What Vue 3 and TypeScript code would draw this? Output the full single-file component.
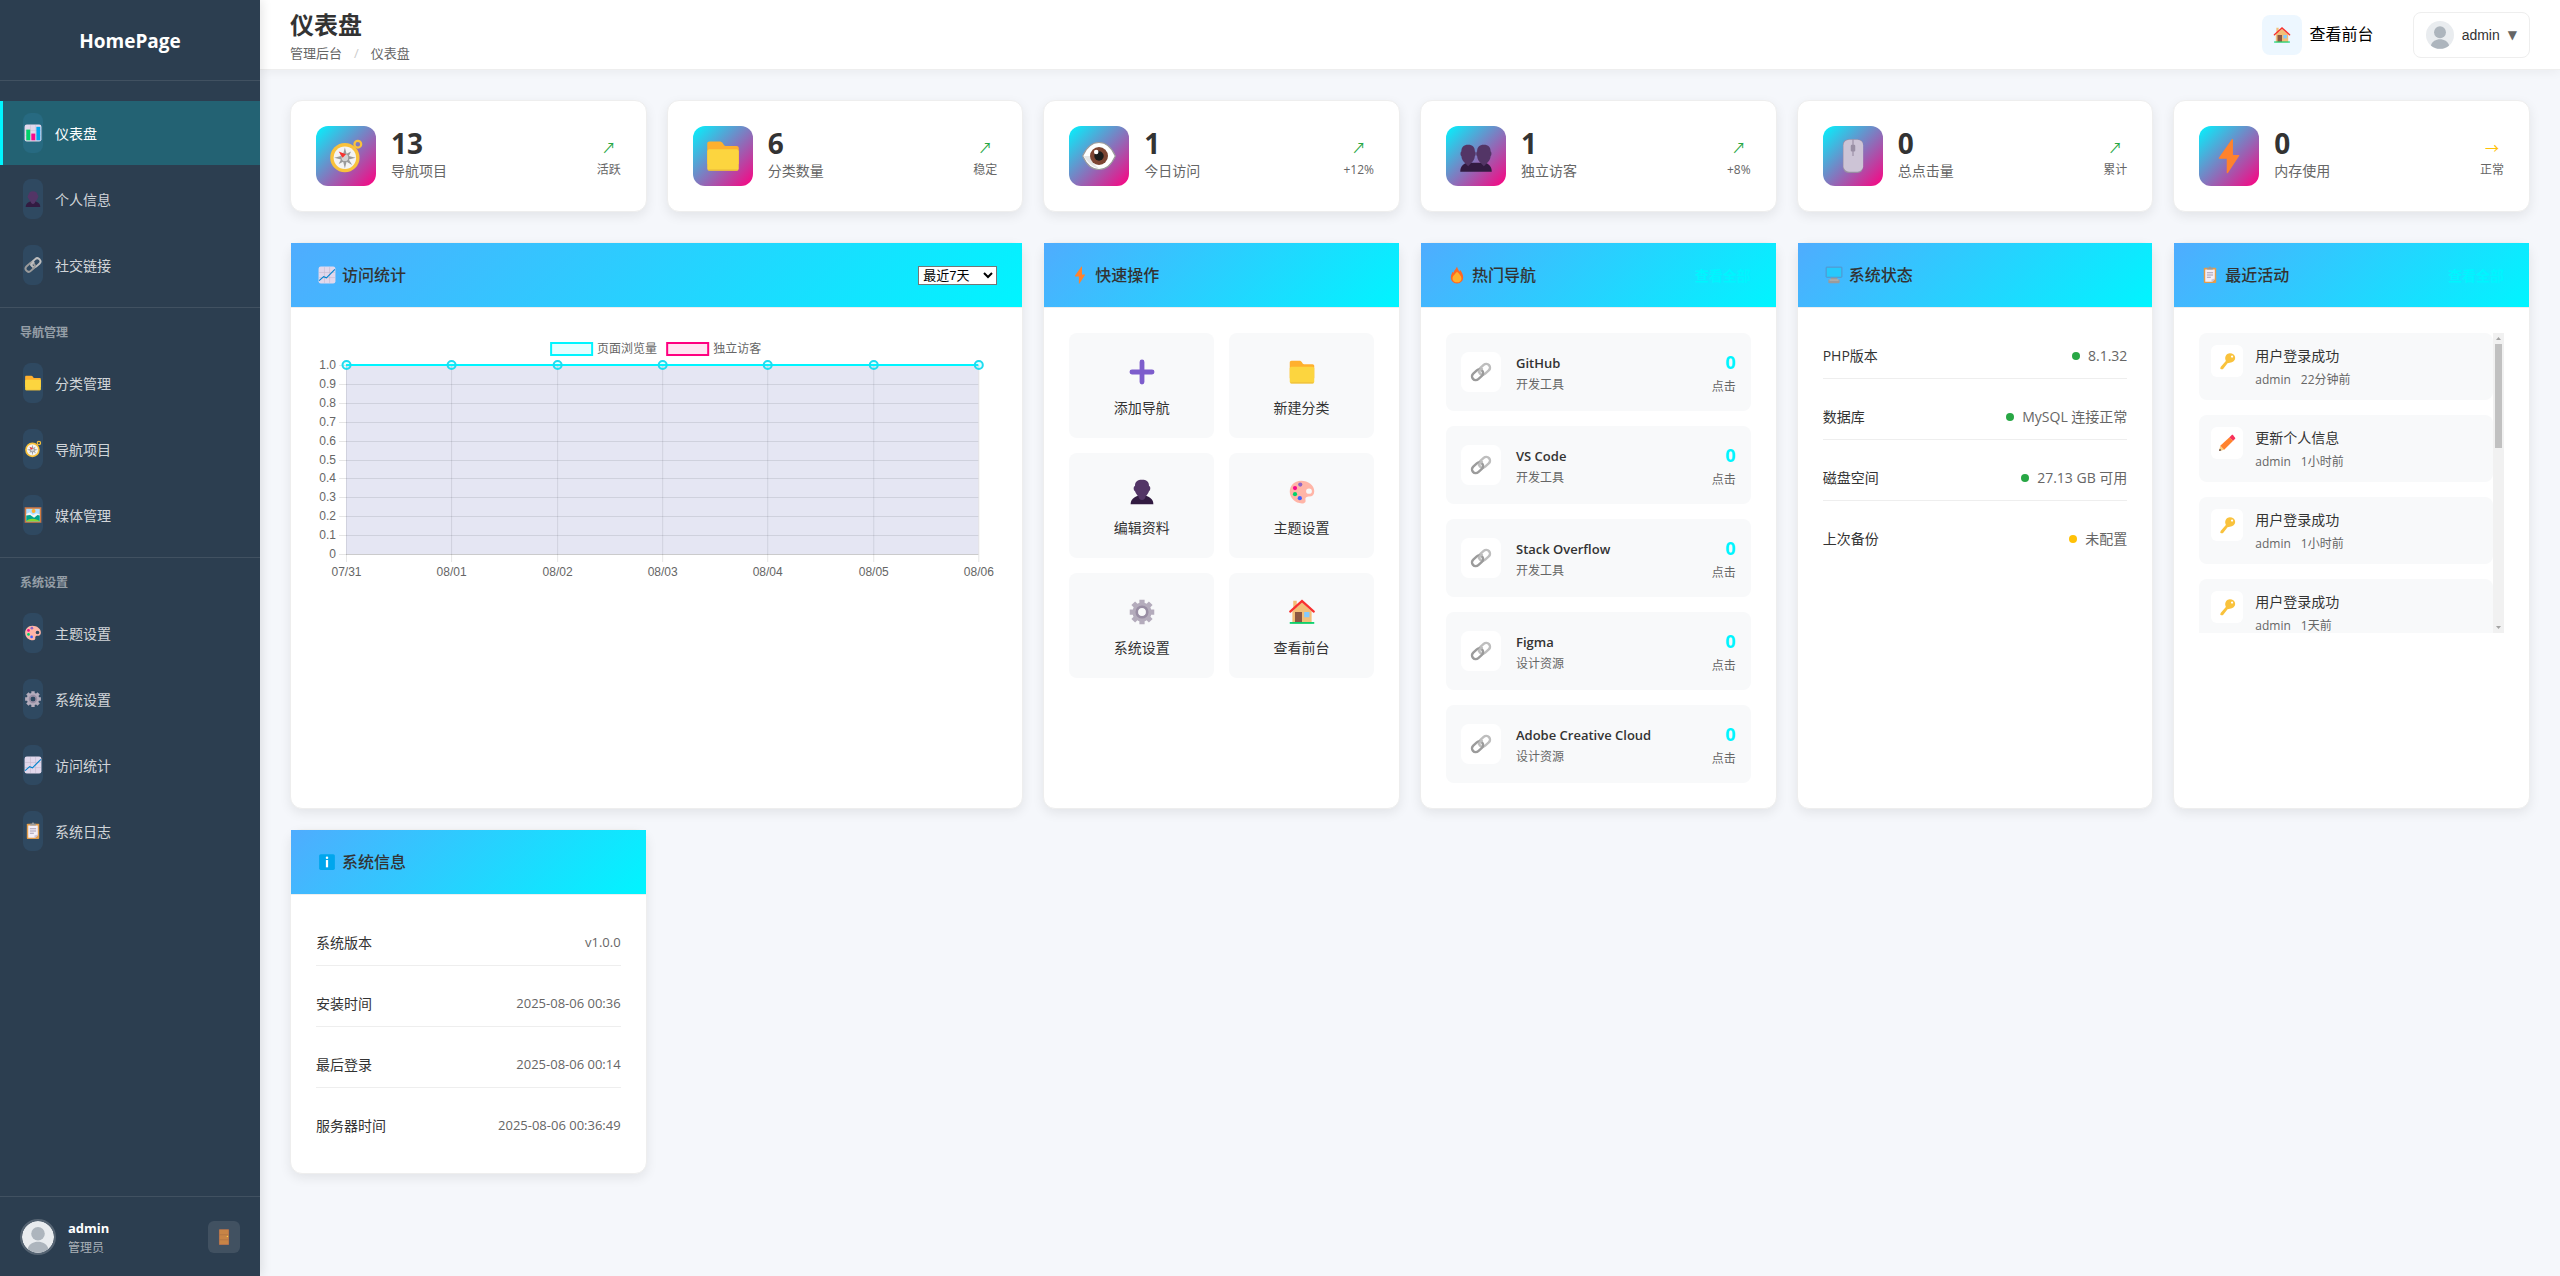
<script setup lang="ts">
import { ref } from 'vue'

interface NavItem { icon: string; label: string; active?: boolean }
interface NavSection { title?: string; items: NavItem[] }

const sections: NavSection[] = [
  {
    items: [
      { icon: 'bars', label: '仪表盘', active: true },
      { icon: 'person', label: '个人信息' },
      { icon: 'link', label: '社交链接' },
    ],
  },
  {
    title: '导航管理',
    items: [
      { icon: 'folder', label: '分类管理' },
      { icon: 'compass', label: '导航项目' },
      { icon: 'picture', label: '媒体管理' },
    ],
  },
  {
    title: '系统设置',
    items: [
      { icon: 'palette', label: '主题设置' },
      { icon: 'gear', label: '系统设置' },
      { icon: 'trend', label: '访问统计' },
      { icon: 'clipboard', label: '系统日志' },
    ],
  },
]

const stats = [
  { icon: 'compass', value: '13', label: '导航项目', arrow: '↗', note: '活跃' },
  { icon: 'folder', value: '6', label: '分类数量', arrow: '↗', note: '稳定' },
  { icon: 'eye', value: '1', label: '今日访问', arrow: '↗', note: '+12%' },
  { icon: 'people', value: '1', label: '独立访客', arrow: '↗', note: '+8%' },
  { icon: 'mouse', value: '0', label: '总点击量', arrow: '↗', note: '累计' },
  { icon: 'bolt', value: '0', label: '内存使用', arrow: '→', note: '正常', steady: true },
]

const actions = [
  { icon: 'plus', label: '添加导航' },
  { icon: 'folder', label: '新建分类' },
  { icon: 'person', label: '编辑资料' },
  { icon: 'palette', label: '主题设置' },
  { icon: 'gear', label: '系统设置' },
  { icon: 'house', label: '查看前台' },
]

const popular = [
  { name: 'GitHub', group: '开发工具' },
  { name: 'VS Code', group: '开发工具' },
  { name: 'Stack Overflow', group: '开发工具' },
  { name: 'Figma', group: '设计资源' },
  { name: 'Adobe Creative Cloud', group: '设计资源' },
]

const status = [
  { label: 'PHP版本', value: '8.1.32', ok: true },
  { label: '数据库', value: 'MySQL 连接正常', ok: true },
  { label: '磁盘空间', value: '27.13 GB 可用', ok: true },
  { label: '上次备份', value: '未配置', ok: false },
]

const activity = [
  { icon: 'key', title: '用户登录成功', time: '22分钟前' },
  { icon: 'pencil', title: '更新个人信息', time: '1小时前' },
  { icon: 'key', title: '用户登录成功', time: '1小时前' },
  { icon: 'key', title: '用户登录成功', time: '1天前' },
]

const info = [
  { label: '系统版本', value: 'v1.0.0' },
  { label: '安装时间', value: '2025-08-06 00:36' },
  { label: '最后登录', value: '2025-08-06 00:14' },
  { label: '服务器时间', value: '2025-08-06 00:36:49' },
]

const range = ref('7')

// Chart geometry, in the units of the chart's viewBox
const plot = { left: 30, right: 662, top: 32, bottom: 221 }
const days = ['07/31', '08/01', '08/02', '08/03', '08/04', '08/05', '08/06']
const xTicks = days.map((label, i) => ({
  label,
  x: Math.round(plot.left + ((plot.right - plot.left) * i) / (days.length - 1)) + 0.5,
}))
const yTicks = Array.from({ length: 11 }, (_, i) => ({
  label: i === 0 ? '0' : (i / 10).toFixed(1),
  y: Math.round(plot.bottom - ((plot.bottom - plot.top) * i) / 10) + 0.5,
}))
</script>

<template>
  <svg class="sprite" aria-hidden="true">
    <symbol id="i-bars" viewBox="0 0 32 32">
      <rect x="1" y="1" width="30" height="30" rx="4" fill="#e1d8ec" />
      <path d="M11.500 2v28M20.500 2v28M2 11.500h28M2 20.500h28" stroke="#cdc4d6" />
      <path d="M4 10h7v19H4z" fill="#00d26a" />
      <path d="M13 17h7v12h-7z" fill="#f70a8d" />
      <path d="M22 5h7v24h-7z" fill="#00a6ed" />
    </symbol>
    <symbol id="i-person" viewBox="0 0 32 32">
      <path d="M3 30c0-5 3-8 9-10h8c6 2 9 5 9 10z" fill="#321b41" />
      <path d="M16 2c5 0 8 2 8 7 2 0 2 5 0 6-1 3-3 5-4 6 0 2-2 4-4 4s-4-2-4-4c-1-1-3-3-4-6-2-1-2-6 0-6 0-5 3-7 8-7z" fill="#533566" />
    </symbol>
    <symbol id="i-people" viewBox="0 0 32 32">
      <path d="M2 30c0-4 2-7 6-8h16c4 1 6 4 6 8z" fill="#321b41" />
      <path d="M9 6c4 0 6 2 6 6 1 0 1 4 0 4 0 3-2 5-3 6l-3 3-3-3c-1-1-3-3-3-6-1 0-1-4 0-4 0-4 2-6 6-6zM23 6c4 0 6 2 6 6 1 0 1 4 0 4 0 3-2 5-3 6l-3 3-3-3c-1-1-3-3-3-6-1 0-1-4 0-4 0-4 2-6 6-6z" fill="#533566" />
    </symbol>
    <symbol id="i-link" viewBox="0 0 32 32">
      <g fill="none" stroke-width="3.500">
        <rect x="12" y="6.500" width="18" height="11" rx="5.500" transform="rotate(-42 21 12)" stroke="#bebebe" />
        <rect x="2" y="14.500" width="18" height="11" rx="5.500" transform="rotate(-42 11 20)" stroke="#9b9b9b" />
        <path d="M13 17c0-2 1-3 2-4l3-3" stroke="#bebebe" />
      </g>
    </symbol>
    <symbol id="i-folder" viewBox="0 0 32 32">
      <path d="M4 3h9c1 0 2 .5 2.500 1.300L17 6.500c.5.600 1 .5 2 .5h9c1.200 0 2 .8 2 2v14H2V5c0-1.200.8-2 2-2z" fill="#ffb02e" />
      <rect x="2" y="10" width="28" height="19" rx="2" fill="#fcd53f" />
      <path d="M3 28.500h26" stroke="#e8b63a" />
    </symbol>
    <symbol id="i-compass" viewBox="0 0 32 32">
      <circle cx="26.500" cy="5.500" r="3" fill="none" stroke="#f9c23c" stroke-width="2" />
      <circle cx="15" cy="17.500" r="13" fill="#f9c23c" />
      <circle cx="15" cy="17.500" r="10" fill="#f4f4f4" />
      <path d="M15 8.500l1.500 5.500 4-2-2 4 6 1.500-6 1.500 3 5-5-3-1.500 6-1.500-6-4 2 2-4-6-1.500 6-1.500-1-3 3 1z" fill="#9b9b9b" />
      <circle cx="15" cy="17.500" r="3" fill="#d3d3d3" />
      <path d="M9.500 12l6.500 2.500-3 3z" fill="#f8312f" />
    </symbol>
    <symbol id="i-picture" viewBox="0 0 32 32">
      <rect x="1" y="2" width="30" height="28" fill="#a56953" />
      <rect x="2" y="3" width="28" height="26" fill="#d67d3e" />
      <rect x="4" y="5" width="24" height="22" fill="#aeddff" />
      <path d="M4 14l6-3 6 5 6-3 6 2v12H4z" fill="#f4f4f4" />
      <path d="M4 17l7-1 7 5 6-5 4 1v10H4z" fill="#00a38b" />
      <path d="M4 27c3-6 18-6 24 0z" fill="#86d72f" />
      <circle cx="17" cy="9" r="3.500" fill="#ffb02e" />
    </symbol>
    <symbol id="i-palette" viewBox="0 0 32 32">
      <path fill-rule="evenodd" d="M15 3C7 3 2 9 2 15.500 2 23 8 29 16 29c3.500 0 4.500-2 4-4-.5-3 1.500-4 4-4 4 0 6-2 6-6C30 8 23 3 15 3zm9 9a3.300 3 0 1 1 0 6 3.300 3 0 0 1 0-6z" fill="#ffb5a7" />
      <circle cx="14" cy="7.500" r="2.400" fill="#8d65c5" />
      <circle cx="8" cy="11.500" r="2.400" fill="#f70a8d" />
      <circle cx="8" cy="18.500" r="2.400" fill="#00d26a" />
      <circle cx="13.500" cy="23" r="2.400" fill="#3f5fff" />
    </symbol>
    <symbol id="i-gear" viewBox="0 0 32 32">
      <path d="M16 2v7M16 23v7M2 16h7M23 16h7M6 6l5 5M21 21l5 5M26 6l-5 5M6 26l5-5" stroke="#b4acbc" stroke-width="6" />
      <circle cx="16" cy="16" r="8" fill="none" stroke="#b4acbc" stroke-width="6" />
      <circle cx="16" cy="16" r="6" fill="none" stroke="#998ea4" stroke-width="3" />
    </symbol>
    <symbol id="i-trend" viewBox="0 0 32 32">
      <rect x="1" y="1" width="30" height="30" rx="4" fill="#e1d8ec" />
      <path d="M11.500 2v28M20.500 2v28M2 11.500h28M2 20.500h28" stroke="#c3b9ce" />
      <path d="M2 26l8-7 5 2L30 6" fill="none" stroke="#0084ce" stroke-width="2" />
    </symbol>
    <symbol id="i-clipboard" viewBox="0 0 32 32">
      <rect x="5" y="3" width="22" height="27" rx="1.500" fill="#e39d4a" />
      <path d="M7.500 6h17v17l-5 5h-12z" fill="#f3eef8" />
      <path d="M24.500 22v2l-4 4h-2v-4z" fill="#cdc4d6" />
      <path d="M11 6V3h3c0-3 4-3 4 0h3v3z" fill="#9b9b9b" />
      <path d="M10.500 12h11M10.500 16h11M10.500 20h7" stroke="#998ea4" stroke-width="1.500" />
    </symbol>
    <symbol id="i-eye" viewBox="0 0 32 32">
      <path d="M1.500 16C5 8 10 4 16 4s11 4 14.500 12C27 24 22 28 16 28S5 24 1.500 16z" fill="#fff" stroke="#9b9b9b" />
      <path d="M2.500 16C6 22 10 26 16 27c-4-3-7-7-7-11z" fill="#e6e6e6" />
      <circle cx="16" cy="16" r="8" fill="#7d4533" />
      <circle cx="16" cy="16" r="4.200" fill="#1c1c1c" />
      <circle cx="13.500" cy="12.500" r="2" fill="#fff" />
    </symbol>
    <symbol id="i-mouse" viewBox="0 0 32 32">
      <rect x="7" y="1" width="18" height="30" rx="5" fill="#998ea4" />
      <rect x="7.500" y="1.500" width="17.500" height="28.500" rx="5" fill="#cdc4d6" />
      <path d="M16 1v15" stroke="#998ea4" />
      <rect x="14" y="6" width="4" height="6" rx="1" fill="#998ea4" />
    </symbol>
    <symbol id="i-bolt" viewBox="0 0 32 32">
      <path d="M18.500 1L7 17.500c-.3.500 0 1 .5 1H14V31c0 .5.600.5 1 0l10-15c.4-.6 0-1-.5-1h-5V1.500c0-.6-.6-.8-1-.5z" fill="#ff822d" />
    </symbol>
    <symbol id="i-fire" viewBox="0 0 32 32">
      <path d="M16 1c1 5 3 6 4 9 1-1 2-2 2-3 3 5 5 9 5 13 0 6-4 11-11 11S5 26 5 20c0-4 2-6 3-10 1 1 1 1 2 2 1-5 5-7 6-11z" fill="#ff6723" />
      <path d="M16 10c3 3 8 7 8 12 0 4-3 7-8 7s-8-3-8-7c0-5 5-8 8-12z" fill="#ffb02e" />
    </symbol>
    <symbol id="i-desktop" viewBox="0 0 32 32">
      <rect x="2" y="2" width="28" height="18" rx="1" fill="#26c9fc" stroke="#5f8ac0" stroke-width="1.500" />
      <path d="M10 21h12v3h4v5c0 1-1 1.500-2 1.500H8c-1 0-2-.5-2-1.500v-5h4z" fill="#9b9b9b" />
      <path d="M8 25h16" stroke="#d3d3d3" />
    </symbol>
    <symbol id="i-info" viewBox="0 0 32 32">
      <rect x="2" y="2" width="28" height="28" rx="3" fill="#00a6ed" />
      <circle cx="16" cy="8.500" r="2.200" fill="#fff" />
      <path d="M16 12.500v13" stroke="#fff" stroke-width="4" />
    </symbol>
    <symbol id="i-plus" viewBox="0 0 32 32">
      <path d="M16 4.500v23M4.500 16h23" stroke="#7d5dcc" stroke-width="5.500" stroke-linecap="round" />
    </symbol>
    <symbol id="i-house" viewBox="0 0 32 32">
      <path d="M6 3h4v10H6zM5 15L16 5l11 10v14H5z" fill="#f2be78" />
      <path d="M2.500 15.500L16 3.500l13.500 12" fill="none" stroke="#f8312f" stroke-width="2.500" stroke-linecap="round" />
      <path d="M8 16h8v12H8z" fill="#8b5742" />
      <path d="M18.500 16h6v6h-6z" fill="#83cbff" />
      <path d="M2 28.500h28" stroke="#00d26a" stroke-width="2" />
    </symbol>
    <symbol id="i-key" viewBox="0 0 32 32">
      <path fill-rule="evenodd" d="M21 2a9 8 0 1 1 0 17l-4 1-8 10c-1 1.500-5 1-5-1l1-3 9-10-1-3C12 7 16 2 21 2zm4 4a2 2 0 1 0 0 4 2 2 0 0 0 0-4z" fill="#f9c23c" />
    </symbol>
    <symbol id="i-pencil" viewBox="0 0 32 32">
      <path d="M2 30l2-9 7 7z" fill="#ffce7c" />
      <path d="M2 30l1-4 3 3z" fill="#402a32" />
      <path d="M4 21L20 6l7 6-16 16z" fill="#ff822d" />
      <path d="M20 6l4-4c1-1 2-1 3 0l3 4c1 1 1 2 0 3l-3 3z" fill="#f8315a" />
    </symbol>
    <symbol id="i-door" viewBox="0 0 32 32">
      <rect x="7" y="2" width="18" height="28" rx="1" fill="#a56953" />
      <path d="M8 3h16v26H8z" fill="#c78446" />
      <path d="M8 12h16M8 21h16" stroke="#a56f43" />
      <circle cx="22" cy="15" r="1.200" fill="#fcd53f" />
    </symbol>
    <symbol id="i-avatar" viewBox="0 0 40 40">
      <circle cx="20" cy="20" r="20" fill="#e9ecef" />
      <circle cx="20" cy="16" r="8.500" fill="#adb5bd" />
      <path d="M7 35c3-12 23-12 26 0a20 20 0 0 1-26 0z" fill="#adb5bd" />
    </symbol>
  </svg>

  <div class="layout">
    <aside class="sidebar">
      <div class="brand">HomePage</div>
      <nav class="menu">
        <div v-for="(section, i) in sections" :key="i" class="section">
          <h2 v-if="section.title" class="section-title">{{ section.title }}</h2>
          <a v-for="item in section.items" :key="item.label" href="#" class="nav-item" :class="{ active: item.active }">
            <span class="pill"><svg class="ic18"><use :href="'#i-' + item.icon" /></svg></span>
            <span>{{ item.label }}</span>
          </a>
        </div>
      </nav>
      <div class="account">
        <svg class="account-avatar"><use href="#i-avatar" /></svg>
        <div class="account-text">
          <strong>admin</strong>
          <span>管理员</span>
        </div>
        <button class="logout" type="button" aria-label="退出"><svg class="ic18"><use href="#i-door" /></svg></button>
      </div>
    </aside>

    <div class="main">
      <header class="topbar">
        <div>
          <h1>仪表盘</h1>
          <div class="crumbs"><a href="#">管理后台</a><i>/</i><span>仪表盘</span></div>
        </div>
        <div class="top-actions">
          <a href="#" class="front"><span class="front-icon"><svg class="ic18"><use href="#i-house" /></svg></span>查看前台</a>
          <button class="user" type="button">
            <svg class="user-avatar"><use href="#i-avatar" /></svg>admin<span class="caret">▼</span>
          </button>
        </div>
      </header>

      <main class="content">
        <section class="stats">
          <article v-for="s in stats" :key="s.label" class="card stat">
            <span class="stat-icon"><svg class="ic36"><use :href="'#i-' + s.icon" /></svg></span>
            <div class="stat-text">
              <div class="stat-value">{{ s.value }}</div>
              <div class="stat-label">{{ s.label }}</div>
            </div>
            <div class="stat-trend">
              <span class="arrow" :class="{ steady: s.steady }">{{ s.arrow }}</span>
              <span>{{ s.note }}</span>
            </div>
          </article>
        </section>

        <section class="widgets">
          <article class="card wide">
            <header class="card-head">
              <h3><svg class="ic-head"><use href="#i-trend" /></svg>访问统计</h3>
              <select v-model="range" aria-label="统计范围">
                <option value="7">最近7天</option>
                <option value="30">最近30天</option>
              </select>
            </header>
            <div class="card-body">
              <svg class="chart" viewBox="0 0 681 250">
                <g stroke-width="2">
                  <rect x="235" y="10" width="41" height="12" fill="#e5feff" stroke="#00f5ff" />
                  <rect x="351" y="10" width="41" height="12" fill="#ffe5f2" stroke="#ff0080" />
                </g>
                <g class="axis">
                  <text x="281" y="20">页面浏览量</text>
                  <text x="397" y="20">独立访客</text>
                </g>
                <g stroke="#000" stroke-opacity=".1">
                  <line v-for="t in yTicks" :key="t.label" :x1="plot.left - 7" :x2="plot.right" :y1="t.y" :y2="t.y" />
                  <line v-for="t in xTicks" :key="t.label" :x1="t.x" :x2="t.x" :y1="plot.top" :y2="plot.bottom + 8" />
                  <line :x1="plot.left" :x2="plot.right" :y1="plot.bottom + 0.5" :y2="plot.bottom + 0.5" />
                </g>
                <rect :x="plot.left" :y="plot.top" :width="plot.right - plot.left" :height="plot.bottom - plot.top" fill="#ff0080" fill-opacity=".1" />
                <rect :x="plot.left" :y="plot.top" :width="plot.right - plot.left" :height="plot.bottom - plot.top" fill="#00f5ff" fill-opacity=".1" />
                <line :x1="plot.left" :x2="plot.right" :y1="plot.top" :y2="plot.top" stroke="#00f5ff" stroke-width="2" />
                <circle v-for="t in xTicks" :key="t.label" :cx="t.x" :cy="plot.top" r="4" fill="#00f5ff" fill-opacity=".1" stroke="#1fdcf0" stroke-width="2" />
                <g class="axis">
                  <text v-for="t in yTicks" :key="t.label" x="20" :y="t.y + 3.5" text-anchor="end">{{ t.label }}</text>
                  <text v-for="t in xTicks" :key="t.label" :x="t.x" y="243" text-anchor="middle">{{ t.label }}</text>
                </g>
              </svg>
            </div>
          </article>

          <article class="card">
            <header class="card-head"><h3><svg class="ic-head"><use href="#i-bolt" /></svg>快速操作</h3></header>
            <div class="card-body actions">
              <button v-for="a in actions" :key="a.label" type="button" class="action">
                <span class="action-icon"><svg class="ic28"><use :href="'#i-' + a.icon" /></svg></span>
                <span>{{ a.label }}</span>
              </button>
            </div>
          </article>

          <article class="card">
            <header class="card-head"><h3><svg class="ic-head"><use href="#i-fire" /></svg>热门导航</h3><a href="#" class="more">查看全部</a></header>
            <div class="card-body list">
              <div v-for="p in popular" :key="p.name" class="popular">
                <span class="popular-icon"><svg class="ic22"><use href="#i-link" /></svg></span>
                <div class="popular-text">
                  <div class="popular-name">{{ p.name }}</div>
                  <div class="small">{{ p.group }}</div>
                </div>
                <div class="popular-hits">
                  <div class="hits">0</div>
                  <div class="small">点击</div>
                </div>
              </div>
            </div>
          </article>

          <article class="card">
            <header class="card-head"><h3><svg class="ic-head"><use href="#i-desktop" /></svg>系统状态</h3></header>
            <dl class="card-body list">
              <div v-for="r in status" :key="r.label" class="row">
                <dt>{{ r.label }}</dt>
                <dd><i class="dot" :class="{ warn: !r.ok }"></i>{{ r.value }}</dd>
              </div>
            </dl>
          </article>

          <article class="card">
            <header class="card-head"><h3><svg class="ic-head"><use href="#i-clipboard" /></svg>最近活动</h3><a href="#" class="more">查看全部</a></header>
            <div class="card-body">
              <div class="feed">
                <div class="feed-list">
                  <div v-for="(a, i) in activity" :key="i" class="event">
                    <span class="event-icon"><svg class="ic18"><use :href="'#i-' + a.icon" /></svg></span>
                    <div>
                      <div class="event-title">{{ a.title }}</div>
                      <div class="event-meta"><span>admin</span><span>{{ a.time }}</span></div>
                    </div>
                  </div>
                </div>
                <div class="scroll" aria-hidden="true">
                  <svg viewBox="0 0 11 11"><path d="M3 7h5L5.500 4z" fill="#a3a3a3" /></svg>
                  <span class="thumb"></span>
                  <svg class="down" viewBox="0 0 11 11"><path d="M3 4h5L5.500 7z" fill="#a3a3a3" /></svg>
                </div>
              </div>
            </div>
          </article>

          <article class="card">
            <header class="card-head"><h3><svg class="ic-head"><use href="#i-info" /></svg>系统信息</h3></header>
            <dl class="card-body list">
              <div v-for="r in info" :key="r.label" class="row">
                <dt>{{ r.label }}</dt>
                <dd class="figures">{{ r.value }}</dd>
              </div>
            </dl>
          </article>
        </section>
      </main>
    </div>
  </div>
</template>

<style>
body {
  margin: 0;
  background: #f5f7fb;
}
</style>

<style scoped>
.sprite {
  display: none;
}
.layout {
  display: flex;
  min-height: 100vh;
  font: 14px/21px "Open Sans", "Noto Sans CJK SC", sans-serif;
  color: #333;
}
.layout * {
  box-sizing: border-box;
}
a {
  color: inherit;
  text-decoration: none;
}
svg {
  display: block;
  flex: none;
}
h1, h2, h3, dl, dd {
  margin: 0;
}
.ic18 { width: 18px; height: 18px; }
.ic22 { width: 22px; height: 22px; }
.ic28 { width: 28px; height: 28px; }
.ic36 { width: 36px; height: 36px; }

/* Sidebar */
.sidebar {
  position: sticky;
  top: 0;
  z-index: 2;
  display: flex;
  flex: none;
  flex-direction: column;
  width: 260px;
  height: 100vh;
  background: #2c3e50;
  color: #fff;
  box-shadow: 2px 0 10px rgba(0, 0, 0, .1);
}
.brand {
  height: 81px;
  border-bottom: 1px solid rgba(255, 255, 255, .1);
  font-size: 19px;
  font-weight: 700;
  line-height: 82px;
  text-align: center;
}
.menu {
  flex: 1;
  padding-top: 20px;
}
.section {
  display: flex;
  flex-direction: column;
  gap: 2px;
  padding-bottom: 10px;
}
.section + .section {
  border-top: 1px solid rgba(255, 255, 255, .1);
}
.section-title {
  padding: 16px 20px 7px;
  color: rgba(255, 255, 255, .5);
  font-size: 12px;
  font-weight: 600;
  line-height: 18px;
}
.nav-item {
  display: flex;
  align-items: center;
  gap: 12px;
  height: 64px;
  padding: 0 20px;
  border-left: 3px solid transparent;
  color: rgba(255, 255, 255, .8);
}
.nav-item.active {
  border-color: #00f5ff;
  background: rgba(0, 245, 255, .2);
  background-clip: padding-box;
  color: #fff;
}
.pill {
  display: flex;
  align-items: center;
  justify-content: center;
  width: 20px;
  height: 40px;
  border-radius: 8px;
  background: rgba(79, 172, 254, .1);
}
.account {
  display: flex;
  align-items: center;
  gap: 12px;
  height: 80px;
  padding: 0 20px;
  border-top: 1px solid rgba(255, 255, 255, .1);
}
.account-avatar {
  width: 36px;
  height: 36px;
  border: 2px solid rgba(255, 255, 255, .2);
  border-radius: 50%;
}
.account-text {
  display: flex;
  flex: 1;
  flex-direction: column;
  padding-top: 2px;
  line-height: 20px;
}
.account-text strong {
  font-size: 13px;
}
.account-text span {
  color: rgba(255, 255, 255, .6);
  font-size: 12px;
}
.logout {
  display: flex;
  align-items: center;
  justify-content: center;
  width: 32px;
  height: 32px;
  padding: 0;
  border: 0;
  border-radius: 6px;
  background: rgba(255, 255, 255, .1);
}

/* Top bar */
.main {
  flex: 1;
  min-width: 0;
}
.topbar {
  display: flex;
  align-items: center;
  justify-content: space-between;
  height: 70px;
  padding: 0 30px;
  border-bottom: 1px solid #eee;
  background: #fff;
  box-shadow: 0 2px 10px rgba(0, 0, 0, .05);
}
h1 {
  font-size: 24px;
  font-weight: 700;
  line-height: 36px;
}
.crumbs {
  display: flex;
  gap: 12px;
  color: #666;
  font-size: 13px;
  line-height: 20px;
}
.crumbs i {
  color: #ccc;
  font-style: normal;
}
.top-actions {
  display: flex;
  align-items: center;
  gap: 39px;
}
.front {
  display: flex;
  align-items: center;
  gap: 8px;
  color: #000;
  font-size: 16px;
}
.front-icon {
  display: flex;
  align-items: center;
  justify-content: center;
  width: 40px;
  height: 40px;
  border-radius: 8px;
  background: rgba(79, 172, 254, .1);
}
.user {
  display: flex;
  align-items: center;
  gap: 8px;
  height: 46px;
  padding: 0 12px;
  border: 1px solid #eee;
  border-radius: 8px;
  background: #fff;
  color: #333;
  font: 14px/20px "Liberation Sans", sans-serif;
}
.user-avatar {
  width: 28px;
  height: 28px;
}
.caret {
  color: #666;
  font-family: "DejaVu Sans", sans-serif;
  font-size: 12px;
}

/* Cards */
.content {
  padding: 30px;
}
.stats, .widgets {
  display: grid;
  grid-template-columns: repeat(6, minmax(0, 1fr));
  gap: 20px;
}
.stats {
  margin-bottom: 30px;
}
.card {
  border: 1px solid #eee;
  border-radius: 12px;
  background: #fff;
  box-shadow: 0 4px 12px rgba(0, 0, 0, .08);
}
.wide {
  grid-column: span 2;
}
.stat {
  display: flex;
  align-items: center;
  gap: 15px;
  height: 112px;
  padding: 25px;
}
.stat-icon {
  display: flex;
  align-items: center;
  justify-content: center;
  width: 60px;
  height: 60px;
  border-radius: 12px;
  background: linear-gradient(135deg, #00f5ff, #ff0080);
}
.stat-text {
  flex: 1;
  padding-bottom: 5px;
}
.stat-value {
  font-size: 28px;
  font-weight: 700;
  line-height: 34px;
}
.stat-label {
  color: #666;
}
.stat-trend {
  display: flex;
  flex-direction: column;
  align-items: center;
  padding-top: 2px;
  color: #666;
  font-size: 12px;
  line-height: 20px;
}
.arrow {
  color: #28a745;
  font-family: "Noto Sans CJK SC", sans-serif;
  font-size: 14px;
  line-height: 26px;
}
.arrow.steady {
  color: #ffc107;
}
.card-head {
  display: flex;
  align-items: center;
  justify-content: space-between;
  height: 65px;
  padding: 0 25px;
  border-bottom: 1px solid #eee;
  background: linear-gradient(135deg, #4facfe, #00f5ff);
  background-clip: padding-box;
}
.card-head h3 {
  display: flex;
  align-items: center;
  gap: 4px;
  font-size: 16px;
  font-weight: 500;
}
.ic-head {
  width: 22px;
  height: 18px;
}
.card-head select {
  width: 79px;
  height: 19px;
  padding: 0;
  border: 1px solid #767676;
  border-radius: 0;
  background: #fff;
  color: #000;
  font: 13px/17px "Liberation Sans", "Noto Sans CJK SC", sans-serif;
}
.more {
  color: #00f5ff;
  font-weight: 700;
}
.card-body {
  padding: 25px;
}
.chart {
  width: 100%;
}
.axis {
  fill: #666;
  font: 12px "Liberation Sans", "Noto Sans CJK SC", sans-serif;
}
.actions {
  display: grid;
  grid-template-columns: 1fr 1fr;
  gap: 15px;
}
.action {
  display: flex;
  flex-direction: column;
  align-items: center;
  gap: 6px;
  padding: 20px;
  border: 0;
  border-radius: 8px;
  background: #f8f9fa;
  color: #333;
  font: inherit;
}
.action-icon {
  display: flex;
  align-items: center;
  height: 38px;
}
.list {
  display: flex;
  flex-direction: column;
  gap: 15px;
}
.small {
  color: #666;
  font-size: 12px;
}
.popular {
  display: flex;
  align-items: center;
  gap: 15px;
  height: 78px;
  padding: 0 15px;
  border-radius: 8px;
  background: #f8f9fa;
}
.popular-icon {
  display: flex;
  align-items: center;
  justify-content: center;
  width: 40px;
  height: 40px;
  border-radius: 8px;
  background: #fff;
}
.popular-text {
  flex: 1;
  padding-top: 3px;
}
.popular-name {
  font-size: 13px;
  font-weight: 600;
}
.popular-hits {
  padding-top: 2px;
  text-align: right;
}
.hits {
  color: #00f5ff;
  font-size: 18px;
  font-weight: 700;
  line-height: 27px;
}
.row {
  display: flex;
  justify-content: space-between;
  padding: 12px 0;
  border-bottom: 1px solid #eee;
}
.row:last-child {
  border-bottom: 0;
}
.row dd {
  display: flex;
  align-items: center;
  gap: 8px;
  color: #666;
}
.row .figures {
  font-size: 13px;
}
.dot {
  width: 8px;
  height: 8px;
  border-radius: 50%;
  background: #28a745;
}
.dot.warn {
  background: #ffc107;
}
.feed {
  display: flex;
  height: 300px;
}
.feed-list {
  display: flex;
  flex: 1;
  flex-direction: column;
  gap: 15px;
  overflow: hidden;
}
.event {
  display: flex;
  flex: none;
  align-items: flex-start;
  gap: 12px;
  padding: 12px;
  border-radius: 8px;
  background: #f8f9fa;
}
.event-icon {
  display: flex;
  align-items: center;
  justify-content: center;
  width: 32px;
  height: 32px;
  border-radius: 6px;
  background: #fff;
}
.event-title {
  margin-bottom: 6px;
}
.event-meta {
  display: flex;
  gap: 10px;
  color: #666;
  font-size: 12px;
  line-height: 16px;
}
.scroll {
  display: flex;
  flex-direction: column;
  align-items: center;
  width: 11px;
  background: #f1f1f1;
}
.scroll svg {
  width: 11px;
  height: 11px;
}
.thumb {
  width: 7px;
  height: 104px;
  background: #c1c1c1;
}
.down {
  margin-top: auto;
}
</style>
